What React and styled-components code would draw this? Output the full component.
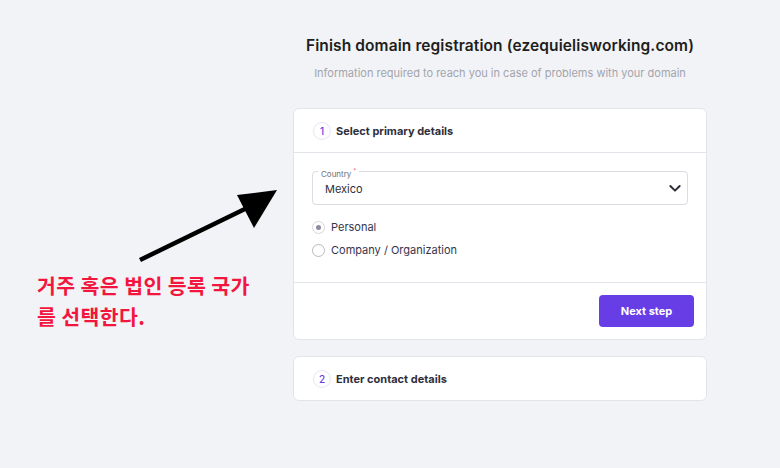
import React from 'react';
import styled, { createGlobalStyle } from 'styled-components';

const Global = createGlobalStyle`
  html, body { margin: 0; padding: 0; background: #f2f3f6; }
  body { font-family: Inter, "Noto Sans", sans-serif; }
`;

const Page = styled.div`
  width: 780px;
  height: 468px;
  display: grid;
  grid-template-columns: 293px 414px 1fr;
  background: #f2f3f6;
  overflow: hidden;
`;

const Side = styled.div`
  display: flex;
  flex-direction: column;
  padding: 190px 0 0 37px;
`;

const Arrow = styled.svg`
  margin-left: 100px;
  width: 145px;
  height: 80px;
`;

const Note = styled.p`
  margin: 0;
  color: #f2163e;
  font-family: "Noto Sans CJK KR", sans-serif;
  font-weight: 700;
  font-size: 20.5px;
  line-height: 31px;
  letter-spacing: 0.4px;
`;

const Main = styled.div`
  display: flex;
  flex-direction: column;
  align-items: center;
  padding-top: 36px;
`;

const Title = styled.h1`
  margin: 0;
  font-size: 15.5px;
  font-weight: 600;
  color: #1d1e20;
  letter-spacing: 0.1px;
`;

const Sub = styled.p`
  margin: 11px 0 0;
  font-size: 11px;
  color: #a3a4ad;
`;

const Card = styled.section`
  align-self: stretch;
  margin-top: ${p => p.$top}px;
  background: #fff;
  border: 1px solid #e3e4ea;
  border-radius: 6px;
`;

const Head = styled.div`
  display: flex;
  align-items: center;
  gap: 5px;
  height: 43px;
  padding: 0 19px;
  border-bottom: ${p => (p.$open ? '1px solid #e3e4ea' : 'none')};
`;

const StepNum = styled.span`
  width: 16px;
  height: 16px;
  border-radius: 50%;
  border: 1px solid #e6e4f5;
  display: flex;
  align-items: center;
  justify-content: center;
  color: #673de6;
  font-size: 10px;
  font-weight: 500;
`;

const HeadText = styled.span`
  font-size: 11px;
  font-weight: 700;
  color: #2f2f3b;
`;

const Body = styled.div`
  padding: 18px 18px 25px;
  display: flex;
  flex-direction: column;
`;

const Field = styled.div`
  position: relative;
  height: 32px;
  border: 1px solid #dadce2;
  border-radius: 4px;
  display: flex;
  align-items: center;
  justify-content: space-between;
  padding: 0 4px 0 12px;
`;

const FieldLabel = styled.span`
  position: absolute;
  top: -6px;
  left: 5px;
  padding: 0 3px;
  background: #fff;
  font-size: 8px;
  color: #6d6e78;
  line-height: 10px;
`;

const Req = styled.span`
  color: #fc5185;
  margin-left: 2px;
  vertical-align: super;
  font-size: 6px;
`;

const FieldValue = styled.span`
  font-size: 11px;
  color: #2f2f3b;
  padding-top: 2px;
`;

const Radios = styled.div`
  display: flex;
  flex-direction: column;
  gap: 9px;
  margin-top: 15px;
`;

const RadioRow = styled.label`
  display: flex;
  align-items: center;
  gap: 6px;
  font-size: 11px;
  color: #36344d;
`;

const Dot = styled.span`
  width: 11px;
  height: 11px;
  border-radius: 50%;
  border: 1px solid ${p => (p.$on ? '#d5d5dc' : '#b8b9c2')};
  display: flex;
  align-items: center;
  justify-content: center;
  &::after {
    content: '';
    width: 5px;
    height: 5px;
    border-radius: 50%;
    background: ${p => (p.$on ? '#8c8c9c' : 'transparent')};
  }
`;

const Foot = styled.div`
  border-top: 1px solid #e3e4ea;
  display: flex;
  justify-content: flex-end;
  padding: 12px 12px 12px;
`;

const Button = styled.button`
  width: 95px;
  height: 32px;
  border: none;
  border-radius: 4px;
  background: #673de6;
  color: #fff;
  font-family: inherit;
  font-size: 11px;
  font-weight: 700;
`;

function Chevron() {
  return (
    <svg width="16" height="16" viewBox="0 0 24 24" fill="none" stroke="#2f2f3b" strokeWidth="3" strokeLinecap="round" strokeLinejoin="round">
      <path d="M5 9l7 7 7-7" />
    </svg>
  );
}

export default function App() {
  return (
    <>
      <Global />
      <Page>
        <Side>
          <Arrow viewBox="0 0 145 80">
            <line x1="3" y1="70" x2="112" y2="17" stroke="#000" strokeWidth="4.5" />
            <polygon points="140,0 100,5 117,38" fill="#000" />
          </Arrow>
          <Note>
            거주 혹은 법인 등록 국가
            <br />
            를 선택한다.
          </Note>
        </Side>
        <Main>
          <Title>Finish domain registration (ezequielisworking.com)</Title>
          <Sub>Information required to reach you in case of problems with your domain</Sub>
          <Card $top={28}>
            <Head $open>
              <StepNum>1</StepNum>
              <HeadText>Select primary details</HeadText>
            </Head>
            <Body>
              <Field>
                <FieldLabel>
                  Country<Req>*</Req>
                </FieldLabel>
                <FieldValue>Mexico</FieldValue>
                <Chevron />
              </Field>
              <Radios>
                <RadioRow>
                  <Dot $on />
                  Personal
                </RadioRow>
                <RadioRow>
                  <Dot />
                  Company / Organization
                </RadioRow>
              </Radios>
            </Body>
            <Foot>
              <Button>Next step</Button>
            </Foot>
          </Card>
          <Card $top={16}>
            <Head>
              <StepNum>2</StepNum>
              <HeadText>Enter contact details</HeadText>
            </Head>
          </Card>
        </Main>
        <div />
      </Page>
    </>
  );
}
